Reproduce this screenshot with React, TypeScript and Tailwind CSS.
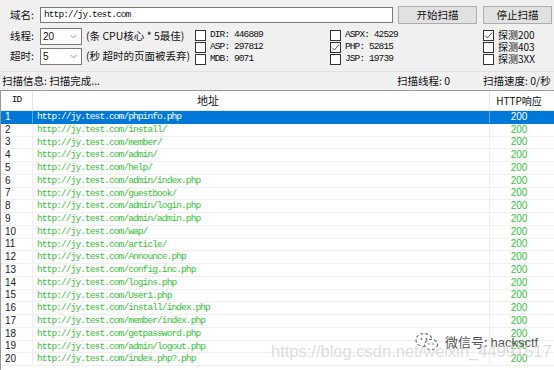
import { ChevronDown } from "lucide-react";

const urls = [
  "phpinfo.php",
  "install/",
  "member/",
  "admin/",
  "help/",
  "admin/index.php",
  "guestbook/",
  "admin/login.php",
  "admin/admin.php",
  "wap/",
  "article/",
  "Announce.php",
  "config.inc.php",
  "logins.php",
  "User1.php",
  "install/index.php",
  "member/index.php",
  "getpassword.php",
  "admin/logout.php",
  "index.php?.php",
];

const cjk = "font-['Noto_Sans_CJK_SC',sans-serif]";
const mono = "font-['Liberation_Mono',monospace] text-[9.5px] tracking-[-0.9px]";

const Check = ({ checked, label }: { checked?: boolean; label: string }) => (
  <div className="flex h-[12px] items-center">
    <div className="flex h-[11px] w-[11px] shrink-0 items-center justify-center border border-[#333] bg-white">
      {checked && (
        <svg width="9" height="9" viewBox="0 0 9 9">
          <polyline points="1,4.5 3.5,7 8,1.5" fill="none" stroke="#555" strokeWidth="1" />
        </svg>
      )}
    </div>
    <span className="ml-[4px] leading-none">{label}</span>
  </div>
);

const Select = ({ value }: { value: string }) => (
  <div className="flex h-[17px] w-[42px] items-center justify-between border border-[#7a7a7a] bg-white pl-[2px] pr-[2px]">
    <span className="font-['Liberation_Sans',sans-serif] text-[10px] leading-none">{value}</span>
    <ChevronDown size={11} strokeWidth={1.2} className="text-[#444]" />
  </div>
);

const App = () => {
  return (
    <div className={`relative h-[370px] w-[554px] overflow-hidden bg-[#f0f0f0] text-[#111] ${cjk}`}>
      {/* top controls */}
      <div className="h-[71px] pl-[10px] pt-[6px] text-[10.5px]">
        <div className="flex h-[18px] items-center">
          <span className="w-[30px] leading-none">域名:</span>
          <div className="flex h-[16px] w-[353px] items-center border border-[#7a7a7a] bg-white pl-[3px]">
            <span className={mono}>http://jy.test.com</span>
          </div>
          <button className="ml-[5px] h-[18px] w-[79px] border border-[#adadad] bg-[#e1e1e1] leading-none">开始扫描</button>
          <button className="ml-[6px] h-[18px] w-[69px] border border-[#adadad] bg-[#e1e1e1] leading-none">停止扫描</button>
        </div>

        <div className="mt-[4px] flex">
          <div className="flex w-[185px] flex-col gap-[3px]">
            <div className="flex h-[17px] items-center">
              <span className="w-[30px] leading-none">线程:</span>
              <Select value="20" />
              <span className="ml-[4px] leading-none">(条 CPU核心 * 5最佳)</span>
            </div>
            <div className="flex h-[17px] items-center">
              <span className="w-[30px] leading-none">超时:</span>
              <Select value="5" />
              <span className="ml-[4px] leading-none">(秒 超时的页面被丢弃)</span>
            </div>
          </div>

          <div className={`flex w-[135px] flex-col pt-[1px] ${mono}`}>
            <Check label="DIR: 446889" />
            <Check label="ASP: 297812" />
            <Check label="MDB: 9071" />
          </div>
          <div className={`flex w-[153px] flex-col pt-[1px] ${mono}`}>
            <Check label="ASPX: 42529" />
            <Check checked label="PHP: 52815" />
            <Check label="JSP: 19739" />
          </div>
          <div className="flex flex-col pt-[1px] text-[10px]">
            <Check checked label="探测200" />
            <Check label="探测403" />
            <Check label="探测3XX" />
          </div>
        </div>
      </div>

      {/* status bar */}
      <div className="flex h-[19px] items-center border-t border-[#e2e2e2] text-[10.5px] leading-none">
        <span className="w-[397px] pl-[2px]">扫描信息: 扫描完成...</span>
        <span className="w-[86px]">扫描线程: 0</span>
        <span>扫描速度: 0/秒</span>
      </div>

      {/* result table */}
      <div className="h-[280px] border-l border-t border-[#9a9a9a] bg-white">
        <div className="flex h-[20px] border-b border-[#e5e5e5]">
          <div className={`flex w-[32px] items-center justify-center border-r border-[#e5e5e5] ${mono}`}>ID</div>
          <div className="flex w-[457px] items-center border-r border-[#e5e5e5] pl-[164px] text-[11px] leading-none">地址</div>
          <div className="flex w-[58px] items-center justify-center text-[10px] leading-none">HTTP响应</div>
        </div>
        {urls.map((u, i) => {
          const sel = i === 0;
          return (
            <div
              key={u}
              className={`flex h-[12.75px] border-b ${sel ? "border-[#0078d7] bg-[#0078d7] text-white" : "border-[#f0f0f0]"}`}
            >
              <div
                className={`flex w-[32px] items-center border-r pl-[4px] font-['Liberation_Sans',sans-serif] text-[10px] leading-none ${
                  sel ? "border-[#5aa5e6]" : "border-[#f0f0f0] text-[#222]"
                }`}
              >
                {i + 1}
              </div>
              <div
                className={`flex w-[457px] items-center border-r pl-[4px] leading-none ${mono} ${
                  sel ? "border-[#5aa5e6]" : "border-[#f0f0f0] text-[#36c236]"
                }`}
              >
                http://jy.test.com/{u}
              </div>
              <div
                className={`flex w-[58px] items-center justify-center font-['Liberation_Sans',sans-serif] text-[10px] leading-none ${
                  sel ? "" : "text-[#36c236]"
                }`}
              >
                200
              </div>
            </div>
          );
        })}
      </div>

      {/* watermark overlay */}
      <div className="pointer-events-none absolute left-[415px] top-[332px] flex items-center gap-[6px]">
        <svg width="24" height="20" viewBox="0 0 24 20">
          <ellipse cx="9" cy="8" rx="8" ry="6.5" fill="white" stroke="#777" strokeWidth="1.2" strokeDasharray="3 2" />
          <ellipse cx="16" cy="12.5" rx="6.5" ry="5.2" fill="white" stroke="#777" strokeWidth="1.2" strokeDasharray="3 2" />
          <circle cx="6.5" cy="7" r="1" fill="#777" />
          <circle cx="11.5" cy="7" r="1" fill="#777" />
          <circle cx="14" cy="12" r="0.8" fill="#777" />
          <circle cx="18" cy="12" r="0.8" fill="#777" />
        </svg>
        <span className="text-[13px] leading-none text-[#555]">
          微信号: <span className="font-['Liberation_Sans',sans-serif]">hacksctf</span>
        </span>
      </div>
      <div className="pointer-events-none absolute left-[271px] top-[343px] font-['Liberation_Sans',sans-serif] text-[16.5px] leading-none text-[#d4d4d4]/80">
        https://blog.csdn.net/weixin_44991517
      </div>
    </div>
  );
};

export default App;
